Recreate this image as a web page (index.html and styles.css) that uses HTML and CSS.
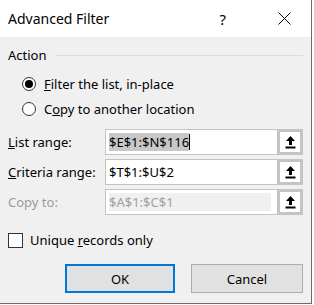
FILE: index.html
```html
<html><head><title>Advanced Filter</title>
<link rel="stylesheet" href="styles.css">
</head>
<body>

<div class="dialog">
  <div class="titlebar">
    <span class="title">Advanced Filter</span>
    <span class="help">?</span>
    <svg class="close" viewBox="0 0 13 13" width="13" height="13">
      <path d="M0.5 0.5 L12.5 12.5 M12.5 0.5 L0.5 12.5" stroke="#000" stroke-width="1" fill="none"/>
    </svg>
  </div>

  <div class="content">
    <div class="group-head">
      <span>Action</span>
      <div class="rule"></div>
    </div>

    <div class="option first">
      <span class="radio checked"></span>
      <span><u>F</u>ilter the list, in-place</span>
    </div>
    <div class="option">
      <span class="radio"></span>
      <span>C<u>o</u>py to another location</span>
    </div>

    <div class="fields">
      <label><u>L</u>ist range:</label>
      <div class="ref">
        <div class="ref-input"><span class="sel">$E$1:$N$116</span><span class="caret"></span></div>
        <div class="ref-btn"><svg viewBox="0 0 11 14" width="11" height="14"><path d="M5.5 1 L10 6 L7 6 L7 10 L4 10 L4 6 L1 6 Z" fill="#000"/><rect x="0.5" y="11.5" width="10" height="2" fill="#000"/></svg></div>
      </div>

      <label><u>C</u>riteria range:</label>
      <div class="ref">
        <div class="ref-input">$T$1:$U$2</div>
        <div class="ref-btn"><svg viewBox="0 0 11 14" width="11" height="14"><path d="M5.5 1 L10 6 L7 6 L7 10 L4 10 L4 6 L1 6 Z" fill="#000"/><rect x="0.5" y="11.5" width="10" height="2" fill="#000"/></svg></div>
      </div>

      <label class="disabled">Copy to:</label>
      <div class="ref">
        <div class="ref-input off"><span class="off-fill">$A$1:$C$1</span></div>
        <div class="ref-btn"><svg viewBox="0 0 11 14" width="11" height="14"><path d="M5.5 1 L10 6 L7 6 L7 10 L4 10 L4 6 L1 6 Z" fill="#000"/><rect x="0.5" y="11.5" width="10" height="2" fill="#000"/></svg></div>
      </div>
    </div>

    <div class="check-row">
      <span class="checkbox"></span>
      <span>Unique <u>r</u>ecords only</span>
    </div>

    <div class="buttons">
      <div class="btn default">OK</div>
      <div class="btn">Cancel</div>
    </div>
  </div>
</div>

</body></html>
```

FILE: styles.css
```css
body {
  margin: 0;
  background: #ffffff;
  font-family: 'Noto Sans', 'Open Sans', sans-serif;
  font-size: 12px;
  color: #000;
}

.dialog {
  width: 311px;
  height: 303px;
  background: #f0f0f0;
  border-right: 1px solid #6b6b6b;
  border-bottom: 1px solid #6b6b6b;
  box-sizing: content-box;
}

.titlebar {
  height: 37px;
  background: #ffffff;
  display: flex;
  align-items: center;
  padding-left: 8px;
}

.title {
  font-size: 14px;
  flex: 1;
}

.help {
  font-size: 15px;
  margin-right: 52px;
}

.close {
  margin-right: 20px;
}

.content {
  padding: 9px 8px 0 8px;
}

.group-head {
  display: flex;
  align-items: center;
  height: 18px;
  font-size: 13px;
}

.group-head .rule {
  flex: 1;
  height: 1px;
  background: #dcdcdc;
  margin-left: 8px;
}

.option {
  display: flex;
  align-items: center;
  height: 25px;
  padding-left: 14px;
  font-size: 13px;
}

.option.first {
  margin-top: 7px;
}

.radio {
  width: 12px;
  height: 12px;
  border: 1px solid #333;
  border-radius: 50%;
  background: #fff;
  margin-right: 8px;
  position: relative;
}

.radio.checked::after {
  content: '';
  position: absolute;
  left: 2px;
  top: 2px;
  width: 8px;
  height: 8px;
  border-radius: 50%;
  background: #000;
}

.fields {
  display: grid;
  grid-template-columns: 97px 198px;
  row-gap: 4px;
  margin-top: 8px;
  font-size: 13px;
}

.fields label {
  display: flex;
  align-items: center;
}

.fields label.disabled {
  color: #9a9a9a;
}

.ref {
  display: flex;
  height: 26px;
}

.ref-input {
  flex: 1;
  border: 1px solid #c4c4c4;
  border-right: none;
  background: #fff;
  display: flex;
  align-items: center;
  padding-left: 3px;
}

.sel {
  background: #c8c8c8;
}

.caret {
  width: 1px;
  height: 16px;
  background: #000;
}

.ref-input.off {
  padding: 3px;
  color: #a0a0a0;
}

.off-fill {
  flex: 1;
  align-self: stretch;
  display: flex;
  align-items: center;
  background: #f0f0f0;
  margin-right: 3px;
}

.ref-btn {
  width: 20px;
  border: 3px solid #c4c4c4;
  background: #fff;
  display: flex;
  align-items: center;
  justify-content: center;
}

.check-row {
  display: flex;
  align-items: center;
  height: 18px;
  margin-top: 16px;
  font-size: 13px;
}

.checkbox {
  width: 13px;
  height: 13px;
  border: 1px solid #333;
  background: #fff;
  margin-right: 7px;
}

.buttons {
  display: flex;
  justify-content: flex-end;
  gap: 16px;
  margin-top: 15px;
}

.btn {
  width: 110px;
  height: 27px;
  border: 1px solid #adadad;
  background: #e1e1e1;
  display: flex;
  align-items: center;
  justify-content: center;
  font-size: 13px;
}

.btn.default {
  width: 106px;
  height: 25px;
  border: 2px solid #0078d7;
}
```
